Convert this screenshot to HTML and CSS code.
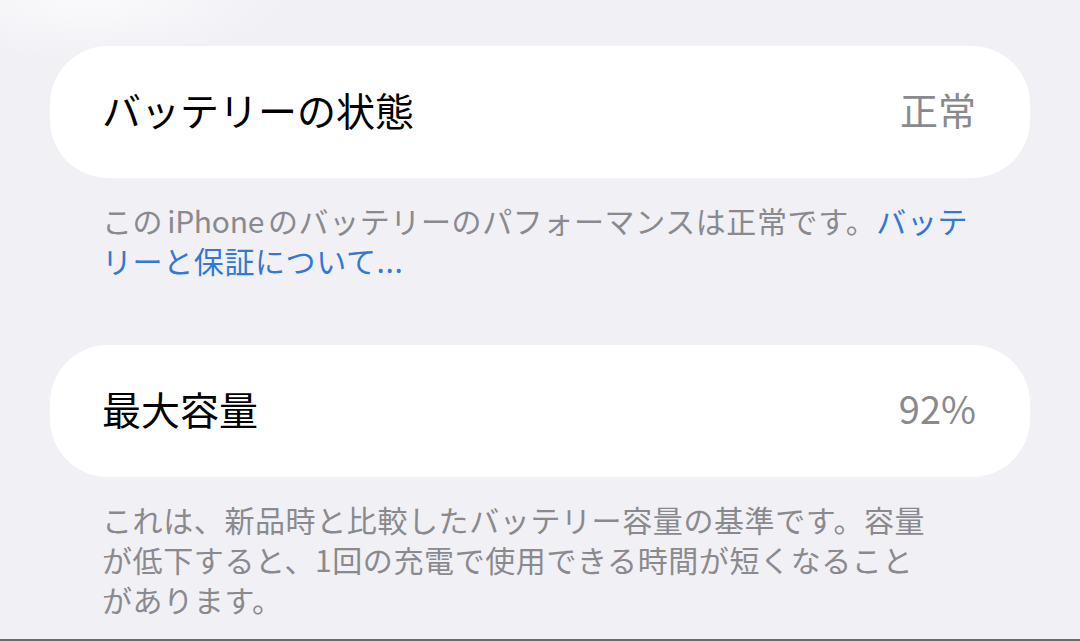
FILE: index.html
```html
<!DOCTYPE html>
<html lang="ja">
<head>
<meta charset="utf-8">
<title>バッテリー</title>
<link rel="stylesheet" href="styles.css">
</head>
<body>
<main class="page">
  <section class="group first">
    <div class="cell">
      <span class="label">バッテリーの状態</span>
      <span class="value">正常</span>
    </div>
    <p class="note">この<span class="latin">iPhone</span>のバッテリーのパフォーマンスは正常です。<a class="link" href="#">バッテ<br>リーと保証について...</a></p>
  </section>
  <section class="group second">
    <div class="cell">
      <span class="label">最大容量</span>
      <span class="value">92%</span>
    </div>
    <p class="note">これは、新品時と比較したバッテリー容量の基準です。容量<br>が低下すると、1回の充電で使用できる時間が短くなること<br>があります。</p>
  </section>
</main>
</body>
</html>
```
FILE: styles.css
```css
html, body {
  margin: 0;
  padding: 0;
}
body {
  width: 1080px;
  height: 641px;
  overflow: hidden;
  background: radial-gradient(ellipse 200px 60px at 90px 0px, #fafafc 0%, rgba(250,250,252,0) 100%), #f1f0f5;
  font-family: "Noto Sans CJK JP", "Noto Sans", sans-serif;
  box-sizing: border-box;
  border-bottom: 2px solid #6b6b6e;
}
.page {
  padding: 46px 50px 0 50px;
  display: flex;
  flex-direction: column;
}
.group.second {
  margin-top: 65px;
}
.cell {
  background: #ffffff;
  height: 132px;
  border-radius: 58px;
  display: flex;
  align-items: center;
  justify-content: space-between;
  padding: 0 54px 6px 52px;
  box-sizing: border-box;
}
.label {
  font-size: 39px;
  color: #000000;
  line-height: 1;
}
.value {
  font-size: 38px;
  color: #8a8a8e;
  line-height: 1;
}
.note {
  margin: 22px 0 0 0;
  padding: 0 52px;
  font-size: 30px;
  letter-spacing: 0.6px;
  line-height: 40px;
  color: #8a8a8e;
  white-space: nowrap;
}
.latin {
  padding: 0 4px;
  letter-spacing: -0.3px;
}
.link {
  color: #3478d6;
  text-decoration: none;
}
```
